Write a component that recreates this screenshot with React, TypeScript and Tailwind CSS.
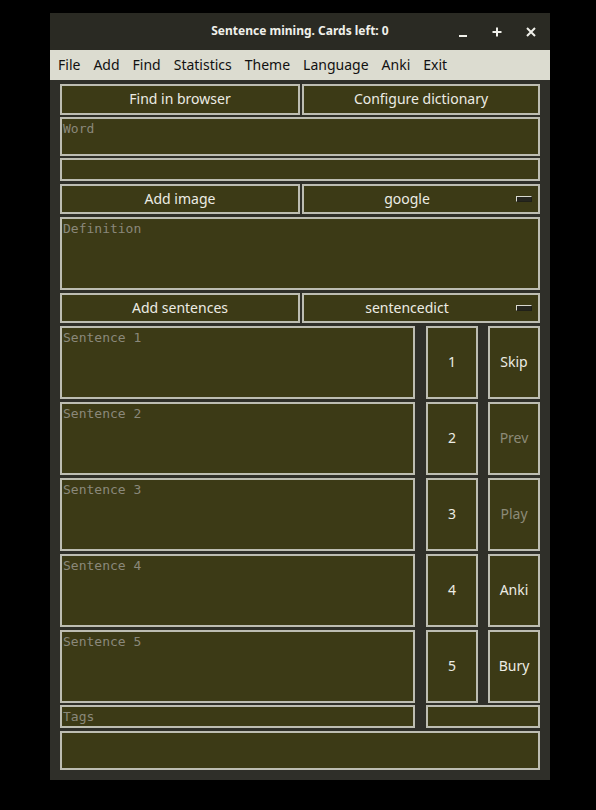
const sans = "font-['Noto_Sans',_'DejaVu_Sans',_sans-serif]";
const mono = "font-['DejaVu_Sans_Mono',_monospace]";

const box = "border-2 border-[#bdbdb2] bg-[#3c3a16]";

function Button({ label, className = "", dim = false }: { label: string; className?: string; dim?: boolean }) {
  return (
    <div
      className={`${box} flex items-center justify-center pb-[2px] text-[14px] ${sans} ${
        dim ? "text-[#8c8a78]" : "text-[#ecece4]"
      } ${className}`}
    >
      {label}
    </div>
  );
}

function Dropdown({ label, className = "" }: { label: string; className?: string }) {
  return (
    <div className={`${box} relative flex items-center justify-center pb-[2px] pr-[28px] text-[14px] text-[#ecece4] ${sans} ${className}`}>
      <span>{label}</span>
      <div className="absolute right-[6px] top-[10px] h-[6px] w-[16px] border-t border-l border-[#d8d8d0] border-b border-r border-b-[#202018] border-r-[#202018] bg-[#26261f]" />
    </div>
  );
}

function Field({ placeholder, className = "" }: { placeholder?: string; className?: string }) {
  return (
    <div className={`${box} px-[1px] pt-[2px] text-[13px] leading-[16px] text-[#8a887a] ${mono} ${className}`}>
      {placeholder}
    </div>
  );
}

const menu = ["File", "Add", "Find", "Statistics", "Theme", "Language", "Anki", "Exit"];

const sentences = [
  { n: "1", action: "Skip", dim: false },
  { n: "2", action: "Prev", dim: true },
  { n: "3", action: "Play", dim: true },
  { n: "4", action: "Anki", dim: false },
  { n: "5", action: "Bury", dim: false },
];

export default function App() {
  return (
    <div className="min-h-[810px] w-[596px] bg-black pt-[13px]">
      <div className="ml-[50px] w-[500px] bg-[#2f2f29]">
        {/* title bar */}
        <div className={`relative flex h-[37px] items-center justify-center bg-[#2a2a23] pb-[2px] text-[12px] font-bold text-[#f0f0ea] ${sans}`}>
          <span>Sentence mining. Cards left: 0</span>
          <div className="absolute right-[12px] top-0 flex h-full items-center gap-[20px] text-[#f0f0ea]">
            <svg width="14" height="14" viewBox="0 0 14 14">
              <rect x="3" y="10" width="8" height="2" fill="currentColor" />
            </svg>
            <svg width="14" height="14" viewBox="0 0 14 14">
              <rect x="2.5" y="6" width="9" height="2" fill="currentColor" />
              <rect x="6" y="2.5" width="2" height="9" fill="currentColor" />
            </svg>
            <svg width="14" height="14" viewBox="0 0 14 14">
              <path d="M3 3 L11 11 M11 3 L3 11" stroke="currentColor" strokeWidth="2" />
            </svg>
          </div>
        </div>

        {/* menu bar */}
        <div className={`flex h-[30px] items-center gap-[13px] bg-[#dcdcd0] pb-[1px] pl-[8px] text-[14px] text-[#111] ${sans}`}>
          {menu.map((m) => (
            <span key={m}>{m}</span>
          ))}
        </div>

        {/* content */}
        <div className="flex flex-col px-[10px] pt-[4px] pb-[10px]">
          <div className="flex gap-[2px]">
            <Button label="Find in browser" className="h-[31px] w-[240px]" />
            <Button label="Configure dictionary" className="h-[31px] flex-1" />
          </div>
          <Field placeholder="Word" className="mt-[2px] h-[39px]" />
          <Field className="mt-[2px] h-[23px]" />
          <div className="mt-[3px] flex gap-[2px]">
            <Button label="Add image" className="h-[30px] w-[240px]" />
            <Dropdown label="google" className="h-[30px] flex-1" />
          </div>
          <Field placeholder="Definition" className="mt-[3px] h-[73px]" />
          <div className="mt-[3px] flex gap-[2px]">
            <Button label="Add sentences" className="h-[30px] w-[240px]" />
            <Dropdown label="sentencedict" className="h-[30px] flex-1" />
          </div>

          {sentences.map((s) => (
            <div key={s.n} className="mt-[3px] flex h-[73px]">
              <Field placeholder={`Sentence ${s.n}`} className="w-[355px]" />
              <Button label={s.n} className="ml-[11px] w-[52px]" />
              <Button label={s.action} dim={s.dim} className="ml-[10px] w-[52px]" />
            </div>
          ))}

          <div className="mt-[2px] flex h-[23px]">
            <Field placeholder="Tags" className="w-[355px]" />
            <Field className="ml-[11px] flex-1" />
          </div>
          <Field className="mt-[3px] h-[39px]" />
        </div>
      </div>
    </div>
  );
}
